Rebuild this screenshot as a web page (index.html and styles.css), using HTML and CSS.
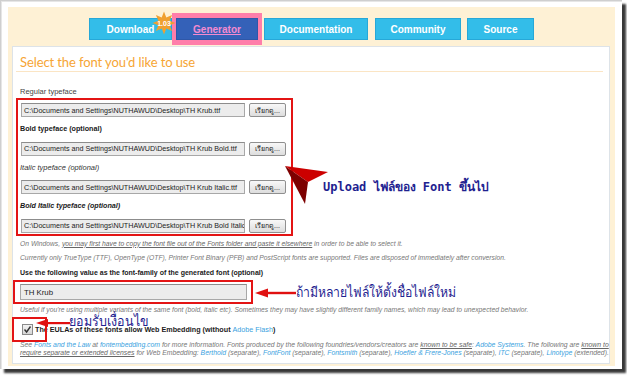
FILE: index.html
```html
<!DOCTYPE html>
<html>
<head>
<meta charset="utf-8">
<link rel="stylesheet" href="styles.css">
</head>
<body>
<div class="frame">
  <div class="cream">
    <nav class="nav">
      <a class="tab t-download">Download</a>
      <span class="hl"><a class="tab t-active">Generator</a></span>
      <a class="tab t-doc">Documentation</a>
      <a class="tab t-comm">Community</a>
      <a class="tab t-src">Source</a>
    </nav>
    <div class="panel">
      <h1 class="title">Select the font you'd like to use</h1>
      <div class="form">
        <div class="label">Regular typeface</div>
        <div class="redbox files">
          <div class="filerow"><span class="field">C:\Documents and Settings\NUTHAWUD\Desktop\TH Krub.ttf</span><span class="btn">เรียกดู...</span></div>
          <div class="label in b">Bold typeface (optional)</div>
          <div class="filerow"><span class="field">C:\Documents and Settings\NUTHAWUD\Desktop\TH Krub Bold.ttf</span><span class="btn">เรียกดู...</span></div>
          <div class="label in i">Italic typeface (optional)</div>
          <div class="filerow"><span class="field">C:\Documents and Settings\NUTHAWUD\Desktop\TH Krub Italic.ttf</span><span class="btn">เรียกดู...</span></div>
          <div class="label in b i">Bold Italic typeface (optional)</div>
          <div class="filerow"><span class="field">C:\Documents and Settings\NUTHAWUD\Desktop\TH Krub Bold Italic.ttf</span><span class="btn">เรียกดู...</span></div>
        </div>
        <p class="note n1">On Windows, <u>you may first have to copy the font file out of the Fonts folder and paste it elsewhere</u> in order to be able to select it.</p>
        <p class="note n2">Currently only TrueType (TTF), OpenType (OTF), Printer Font Binary (PFB) and PostScript fonts are supported. Files are disposed of immediately after conversion.</p>
        <div class="label b fam">Use the following value as the font-family of the generated font (optional)</div>
        <div class="redbox namebox"><span class="field wide">TH Krub</span></div>
        <p class="note n3">Useful if you're using multiple variants of the same font (bold, italic etc). Sometimes they may have slightly different family names, which may lead to unexpected behavior.</p>
        <div class="check"><span class="cb"><svg width="9" height="9" viewBox="0 0 9 9"><path d="M1.5 4.5 L3.6 7 L7.5 1.5" fill="none" stroke="#333" stroke-width="1.4"/></svg></span><span class="cbtext">The EULAs of these fonts allow Web Embedding (without <a class="lnk">Adobe Flash</a>)</span></div>
        <p class="note see">See <a class="lnk">Fonts and the Law</a> at <a class="lnk">fontembedding.com</a> for more information. Fonts produced by the following foundries/vendors/creators are <u>known to be safe</u>: <a class="lnk">Adobe Systems</a>. The following are <u>known to</u><br><u>require separate or extended licenses</u> for Web Embedding: <a class="lnk">Berthold</a> (separate), <a class="lnk">FontFont</a> (separate), <a class="lnk">Fontsmith</a> (separate), <a class="lnk">Hoefler &amp; Frere-Jones</a> (separate), <a class="lnk">ITC</a> (separate), <a class="lnk">Linotype</a> (extended).</p>
      </div>
    </div>
  </div>

  <div class="badge">
    <svg width="24" height="24" viewBox="0 0 24 24"><polygon points="12,0.5 14.3,6.4 20.1,3.9 17.6,9.7 23.5,12 17.6,14.3 20.1,20.1 14.3,17.6 12,23.5 9.7,17.6 3.9,20.1 6.4,14.3 0.5,12 6.4,9.7 3.9,3.9 9.7,6.4" fill="#f0a030"/></svg>
    <span class="badge-text">1.03</span>
  </div>

  <svg class="pointer" width="50" height="46" viewBox="0 0 50 46">
    <polygon points="2,3 45,9 25,19" fill="#cc0000"/>
    <polygon points="2,3 25,19 22,41" fill="#7d0000"/>
  </svg>
  <div class="callout c-upload">Upload ไฟล์ของ Font ขึ้นไป</div>

  <svg class="arrow a-name" width="42" height="12" viewBox="0 0 42 12">
    <polygon points="0,6 13,1.5 13,10.5" fill="#e01010"/>
    <rect x="12" y="4.8" width="29" height="2.4" fill="#e01010"/>
  </svg>
  <div class="callout c-name">ถ้ามีหลายไฟล์ให้ตั้งชื่อไฟล์ใหม่</div>

  <div class="redmark"></div>
  <svg class="arrow a-check" width="34" height="10" viewBox="0 0 34 10">
    <polygon points="0,5 12,1 12,9" fill="#e01010"/>
    <rect x="11" y="4" width="23" height="2.2" fill="#e01010"/>
  </svg>
  <div class="callout c-check">ยอมรับเงื่อนไข</div>
</div>
</body>
</html>
```

FILE: styles.css
```css
* { box-sizing: border-box; }
html, body { margin: 0; padding: 0; background: #ffffff; }
body { width: 627px; height: 377px; overflow: hidden; font-family: "Liberation Sans", Arial, sans-serif; }

.frame {
  position: relative;
  width: 622px;
  height: 369px;
  background: #ffffff;
  box-shadow: inset 1px 1px 0 #cfcfcf, inset 2px 2px 0 #e6e6e6, 4px 4px 2px rgba(0,0,0,0.78);
  padding: 7px 7px 3px 8px;
  display: flex;
  flex-direction: column;
}

.cream {
  flex: 1;
  background: #fef1d5;
  padding: 6px 5px 2px 4px;
  display: flex;
  flex-direction: column;
}

/* nav */
.nav {
  display: flex;
  align-items: center;
  height: 32px;
  padding-left: 77px;
}
.tab {
  display: flex;
  align-items: center;
  justify-content: center;
  height: 22px;
  background: #33bde9;
  border: 1px solid #27a8d8;
  color: #ffffff;
  font-weight: bold;
  font-size: 10px;
  text-decoration: none;
}
.t-download { width: 83px; }
.hl {
  display: block;
  border-style: solid;
  border-color: #ff7eaa;
  border-width: 5px 4px;
  background: #ff7eaa;
}
.t-active {
  width: 82px;
  background: #3461b8;
  border-color: #2f57a8;
  color: #f48ad0;
  text-decoration: underline;
}
.t-doc { width: 104px; margin-left: 2px; }
.t-comm { width: 86px; margin-left: 7px; }
.t-src { width: 67px; margin-left: 6px; }

.badge {
  position: absolute;
  left: 152px;
  top: 11px;
  width: 24px;
  height: 24px;
}
.badge svg { display: block; }
.badge-text {
  position: absolute;
  left: 0; top: 0;
  width: 24px;
  height: 24px;
  display: flex;
  align-items: center;
  justify-content: center;
  color: #ffffff;
  font-weight: bold;
  font-size: 7px;
}

/* panel */
.panel {
  flex: 1;
  margin-top: 1px;
  background: #ffffff;
  border: 1px solid #dde3e8;
  padding: 0 6px 0 3px;
}
.title {
  margin: 0;
  padding: 6px 0 0 4px;
  height: 25px;
  line-height: 18px;
  font-family: Lato, "Open Sans", sans-serif;
  font-weight: 400;
  font-size: 13px;
  letter-spacing: -0.1px;
  color: #f6a534;
  border-bottom: 1px solid #fbe5c4;
}

.form { display: flex; flex-direction: column; }

.label {
  font-size: 7.5px;
  line-height: 12px;
  color: #333;
  padding-left: 4px;
  white-space: nowrap;
}
.label.b { font-weight: bold; color: #1a1a1a; font-size: 7.2px; }
.label.i { font-style: italic; }
.form > .label:first-child { margin-top: 14px; color: #444; }

.redbox { border: 2px solid #e31414; }
.files {
  width: 277px;
  padding: 3px 5px 1px 3px;
  display: flex;
  flex-direction: column;
}
.filerow { display: flex; height: 14px; }
.label.in {
  height: 24.5px;
  display: flex;
  align-items: center;
  padding-left: 0;
  margin-left: -1px;
}

.field {
  display: flex;
  align-items: center;
  height: 100%;
  width: 224px;
  background: #ececec;
  border: 1px solid #a8a8a8;
  border-top-color: #8c8c8c;
  font-size: 7.2px;
  color: #222;
  padding-left: 2px;
  white-space: nowrap;
  overflow: hidden;
}
.btn {
  margin-left: 4px;
  width: 37px;
  height: 100%;
  display: flex;
  align-items: center;
  justify-content: center;
  background: linear-gradient(#f8f8f8, #dddddd);
  border: 1px solid #8f8f8f;
  border-radius: 2px;
  font-size: 7px;
  color: #222;
}

.note {
  margin: 0;
  font-size: 6.75px;
  line-height: 10px;
  font-style: italic;
  color: #777;
  padding-left: 4px;
  white-space: nowrap;
}
.note u { color: #666; }
.n1 { margin-top: 3px; }
.n2 { margin-top: 4px; }
.label.fam { margin-top: 4.5px; font-size: 7px; }
.namebox {
  margin-top: 1px;
  margin-left: -3px;
  width: 240px;
  height: 24px;
  padding: 2px 4px 2px 5px;
}
.field.wide { width: 227px; height: 16px; font-size: 7.8px; padding-left: 3px; }
.n3 { margin-top: 1px; }

.check {
  margin-top: 8px;
  height: 12px;
  display: flex;
  align-items: center;
  padding-left: 6px;
}
.cb {
  width: 11px;
  height: 11px;
  border: 1px solid #8a8a8a;
  background: linear-gradient(#f2f2f2, #d6d6d6);
  display: flex;
  align-items: center;
  justify-content: center;
}
.cb svg { display: block; }
.cbtext {
  margin-left: 2px;
  font-size: 7.2px;
  font-weight: bold;
  color: #1a1a1a;
  white-space: nowrap;
}
.lnk { color: #3a9fe0; text-decoration: none; }
.cbtext .lnk { font-weight: normal; }

.see {
  margin-top: 6px;
  line-height: 8px;
  font-size: 6.85px;
}

/* annotations */
.pointer { position: absolute; left: 283px; top: 163px; }
.callout {
  position: absolute;
  color: #1e2290;
  white-space: nowrap;
}
.c-upload {
  left: 323px;
  top: 180px;
  font-family: "DejaVu Sans Mono", monospace;
  font-weight: bold;
  font-size: 12px;
  line-height: 14px;
}
.arrow { position: absolute; display: block; }
.a-name { left: 255px; top: 287px; }
.c-name {
  left: 296px;
  top: 283px;
  font-size: 12.2px;
  line-height: 18px;
  transform-origin: left center;
  transform: scaleY(1.15);
}
.redmark {
  position: absolute;
  left: 12px;
  top: 317px;
  width: 35px;
  height: 25px;
  border: 2px solid #e31414;
}
.a-check { left: 36px; top: 318px; }
.c-check {
  left: 69px;
  top: 312px;
  font-size: 12.5px;
  line-height: 18px;
  transform-origin: left center;
  transform: scaleY(1.15);
}
```
